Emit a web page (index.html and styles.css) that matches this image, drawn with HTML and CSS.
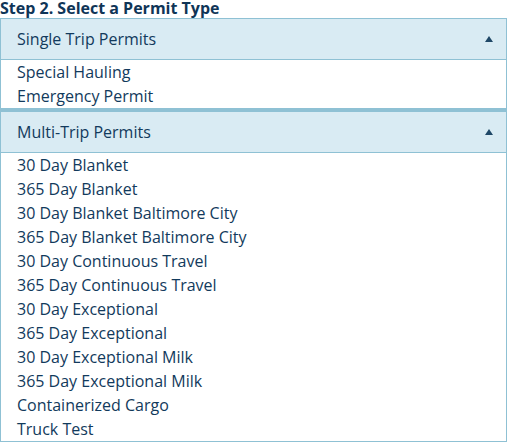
FILE: index.html
```html
<!DOCTYPE html>
<html lang="en">
<head>
  <meta charset="UTF-8" />
  <meta name="viewport" content="width=device-width, initial-scale=1.0"/>
  <title>Select a Permit Type</title>
  <link rel="stylesheet" href="styles.css">
</head>
<body>
  <h3 class="step-title">Step 2. Select a Permit Type</h3>

  <div class="panel">
    <div class="panel-heading">
      <span>Single Trip Permits</span>
      <span class="caret"></span>
    </div>
    <ul class="permit-list">
      <li>Special Hauling</li>
      <li>Emergency Permit</li>
    </ul>
  </div>

  <div class="panel">
    <div class="panel-heading">
      <span>Multi-Trip Permits</span>
      <span class="caret"></span>
    </div>
    <ul class="permit-list">
      <li>30 Day Blanket</li>
      <li>365 Day Blanket</li>
      <li>30 Day Blanket Baltimore City</li>
      <li>365 Day Blanket Baltimore City</li>
      <li>30 Day Continuous Travel</li>
      <li>365 Day Continuous Travel</li>
      <li>30 Day Exceptional</li>
      <li>365 Day Exceptional</li>
      <li>30 Day Exceptional Milk</li>
      <li>365 Day Exceptional Milk</li>
      <li>Containerized Cargo</li>
      <li>Truck Test</li>
    </ul>
  </div>
</body>
</html>
```

FILE: styles.css
```css
body {
  font-family: "Open Sans", "Noto Sans", sans-serif;
  color: #123a5c;
  background-color: #ffffff;
  margin: 0;
  width: 507px;
}

.step-title {
  margin: 0;
  height: 18px;
  font-size: 16px;
  line-height: 17px;
  font-weight: bold;
  color: #0f3557;
  white-space: nowrap;
}

.panel {
  border: 1px solid #8fc1d4;
  border-bottom: 3px solid #8fc1d4;
  width: 505px;
}

.panel-heading {
  display: flex;
  justify-content: space-between;
  align-items: center;
  height: 40px;
  padding: 0 13px 0 16px;
  background-color: #d9ebf3;
  border-bottom: 1px solid #8fc1d4;
  font-size: 16px;
}

.caret {
  width: 0;
  height: 0;
  border-left: 4px solid transparent;
  border-right: 4px solid transparent;
  border-bottom: 6px solid #1f4867;
}

.permit-list {
  list-style: none;
  margin: 0;
  padding: 0 0 0 16px;
}

.permit-list li {
  height: 24px;
  line-height: 24px;
  font-size: 16px;
}
```
